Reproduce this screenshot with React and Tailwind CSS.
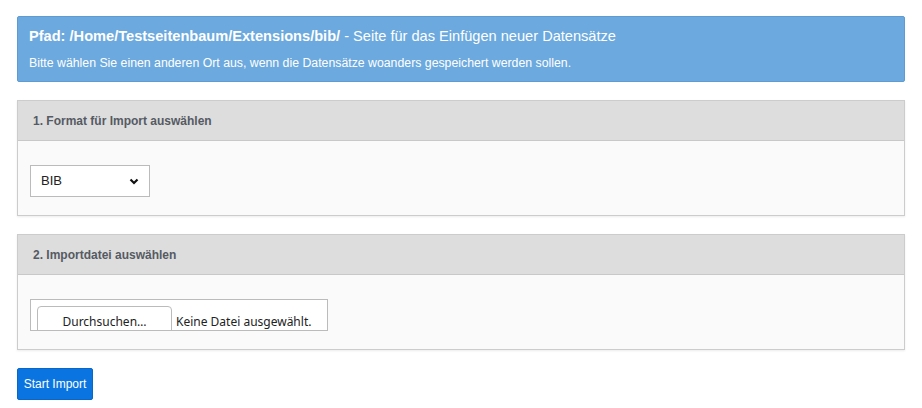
import React from "react";

// Import page: path notice, format select, file picker, start button.

function Panel({ title, children }) {
  return (
    <div className="border border-[#cccccc] shadow-[0_1px_2px_rgba(0,0,0,0.08)]">
      <div className="h-[40px] bg-[#dddddd] border-b border-[#c8c8c8] flex items-center px-[15px] text-[12px] font-bold text-[#555a63]">
        {title}
      </div>
      <div className="bg-[#fafafa] pt-[24px] pb-[18px] px-[12px]">{children}</div>
    </div>
  );
}

function Chevron() {
  return (
    <svg width="10" height="7" viewBox="0 0 10 7" className="block">
      <path d="M1.5 1.5 L5 5 L8.5 1.5" fill="none" stroke="#111" strokeWidth="2.2" />
    </svg>
  );
}

export default function App() {
  return (
    <div className="w-[922px] h-[408px] bg-white px-[17px] pt-[16px] font-['Liberation_Sans',Arial,sans-serif]">
      <div className="h-[66px] bg-[#6ca9de] border border-[#5e9bd3] rounded-[2px] px-[11px] pt-[9px] text-white">
        <div className="text-[14.6px] leading-[20px]">
          <span className="font-bold">Pfad: /Home/Testseitenbaum/Extensions/bib/</span>
          <span> - Seite für das Einfügen neuer Datensätze</span>
        </div>
        <div className="text-[12.3px] leading-[16px] mt-[9px]">
          Bitte wählen Sie einen anderen Ort aus, wenn die Datensätze woanders gespeichert werden sollen.
        </div>
      </div>

      <div className="mt-[18px]">
        <Panel title="1. Format für Import auswählen">
          <div className="w-[120px] h-[32px] bg-white border border-[#bbbbbb] flex items-center justify-between pl-[10px] pr-[10px] text-[13px] text-[#222]">
            <span>BIB</span>
            <Chevron />
          </div>
        </Panel>
      </div>

      <div className="mt-[18px]">
        <Panel title="2. Importdatei auswählen">
          <div className="w-[298px] h-[32px] bg-white border border-[#bbbbbb] overflow-hidden flex items-start pl-[6px] pt-[6px] font-['Noto_Sans',sans-serif] text-[12px] text-[#222]">
            <div className="w-[135px] h-[40px] border border-[#bbbbbb] rounded-t-[4px] bg-white flex justify-center pt-[6px] shrink-0">
              Durchsuchen…
            </div>
            <span className="ml-[4px] pt-[7px]">Keine Datei ausgewählt.</span>
          </div>
        </Panel>
      </div>

      <button
        type="button"
        className="mt-[18px] w-[76px] h-[32px] bg-[#0a75e0] border border-[#0867c8] rounded-[2px] text-white text-[12px] flex items-center justify-center"
      >
        Start Import
      </button>
    </div>
  );
}
